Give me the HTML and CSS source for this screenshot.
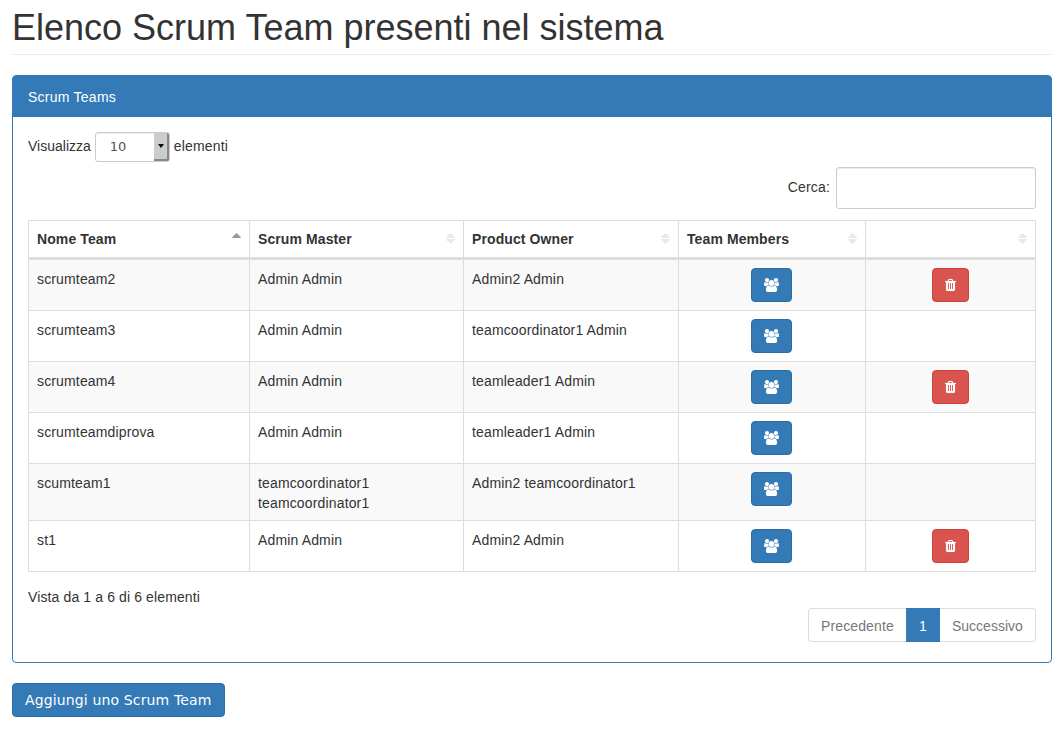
FILE: index.html
```html
<!DOCTYPE html>
<html lang="it">
<head>
<meta charset="utf-8">
<title>Scrum Team</title>
<link rel="stylesheet" href="styles.css">
</head>
<body>
<svg class="sprite" width="0" height="0" aria-hidden="true">
  <symbol id="users" viewBox="0 0 1920 1792"><path d="M593 896q-162 5-265 128h-134q-82 0-138-40.500t-56-118.500q0-353 124-353 6 0 43.500 21t97.500 42.500 119 21.500q67 0 133-23-5 37-5 66 0 139 81 256zm1071 637q0 120-73 189.500t-194 69.500h-874q-121 0-194-69.500t-73-189.500q0-53 3.500-103.500t14-109 26.500-108.500 43-97.500 62-81 85.500-53.500 111.500-20q10 0 43 21.500t73 48 107 48 135 21.500 135-21.500 107-48 73-48 43-21.500q61 0 111.500 20t85.500 53.500 62 81 43 97.500 26.500 108.500 14 109 3.500 103.500zm-1024-1277q0 106-75 181t-181 75-181-75-75-181 75-181 181-75 181 75 75 181zm704 384q0 159-112.500 271.500t-271.500 112.500-271.500-112.500-112.500-271.500 112.500-271.500 271.500-112.500 271.500 112.500 112.500 271.500zm576 225q0 78-56 118.500t-138 40.500h-134q-103-123-265-128 81-117 81-256 0-29-5-66 66 23 133 23 59 0 119-21.500t97.500-42.500 43.500-21q124 0 124 353zm-128-609q0 106-75 181t-181 75-181-75-75-181 75-181 181-75 181 75 75 181z"/></symbol>
  <symbol id="trash" viewBox="192 0 1408 1792"><path d="M704 1376v-704q0-14-9-23t-23-9h-64q-14 0-23 9t-9 23v704q0 14 9 23t23 9h64q14 0 23-9t9-23zm256 0v-704q0-14-9-23t-23-9h-64q-14 0-23 9t-9 23v704q0 14 9 23t23 9h64q14 0 23-9t9-23zm256 0v-704q0-14-9-23t-23-9h-64q-14 0-23 9t-9 23v704q0 14 9 23t23 9h64q14 0 23-9t9-23zm-544-992h448l-48-117q-7-9-17-11h-317q-10 2-17 11zm928 32v64q0 14-9 23t-23 9h-96v948q0 83-47 143.500t-113 60.500h-832q-66 0-113-58.500t-47-141.500v-952h-96q-14 0-23-9t-9-23v-64q0-14 9-23t23-9h309l70-167q15-37 54-63t79-26h320q40 0 79 26t54 63l70 167h309q14 0 23 9t9 23z"/></symbol>
  <symbol id="sort-asc" viewBox="0 0 9 12"><path d="M4.500 0L8.700 4Q9.200 5 8.200 5H.8Q-.2 5 .3 4z"/></symbol>
  <symbol id="sort" viewBox="0 0 9 12"><path d="M4.500 0L8.700 4Q9.200 5 8.200 5H.8Q-.2 5 .3 4zM4.500 11L8.700 7Q9.200 6 8.200 6H.8Q-.2 6 .3 7z"/></symbol>
</svg>

<h1 class="page-header">Elenco Scrum Team presenti nel sistema</h1>

<section class="panel">
  <div class="panel-heading">Scrum Teams</div>
  <div class="panel-body">
    <div class="length">
      <span>Visualizza</span>
      <div class="select"><span class="select-value">10</span><span class="select-arrow"></span></div>
      <span class="length-unit">elementi</span>
    </div>
    <label class="filter"><span class="filter-label">Cerca:</span><input class="search" type="text"></label>

    <table class="teams">
      <colgroup><col class="c-name"><col class="c-master"><col class="c-owner"><col class="c-members"><col class="c-actions"></colgroup>
      <thead>
        <tr>
          <th><div class="head">Nome Team<svg class="sort sorted"><use href="#sort-asc"/></svg></div></th>
          <th><div class="head">Scrum Master<svg class="sort"><use href="#sort"/></svg></div></th>
          <th><div class="head">Product Owner<svg class="sort"><use href="#sort"/></svg></div></th>
          <th><div class="head">Team Members<svg class="sort"><use href="#sort"/></svg></div></th>
          <th><div class="head"><span></span><svg class="sort"><use href="#sort"/></svg></div></th>
        </tr>
      </thead>
      <tbody>
        <tr><td>scrumteam2</td><td>Admin Admin</td><td>Admin2 Admin</td>
          <td><a class="btn primary"><svg class="users"><use href="#users"/></svg></a></td>
          <td><a class="btn danger"><svg class="trash"><use href="#trash"/></svg></a></td></tr>
        <tr><td>scrumteam3</td><td>Admin Admin</td><td>teamcoordinator1 Admin</td>
          <td><a class="btn primary"><svg class="users"><use href="#users"/></svg></a></td><td></td></tr>
        <tr><td>scrumteam4</td><td>Admin Admin</td><td>teamleader1 Admin</td>
          <td><a class="btn primary"><svg class="users"><use href="#users"/></svg></a></td>
          <td><a class="btn danger"><svg class="trash"><use href="#trash"/></svg></a></td></tr>
        <tr><td>scrumteamdiprova</td><td>Admin Admin</td><td>teamleader1 Admin</td>
          <td><a class="btn primary"><svg class="users"><use href="#users"/></svg></a></td><td></td></tr>
        <tr><td>scumteam1</td><td>teamcoordinator1<br>teamcoordinator1</td><td>Admin2 teamcoordinator1</td>
          <td><a class="btn primary"><svg class="users"><use href="#users"/></svg></a></td><td></td></tr>
        <tr><td>st1</td><td>Admin Admin</td><td>Admin2 Admin</td>
          <td><a class="btn primary"><svg class="users"><use href="#users"/></svg></a></td>
          <td><a class="btn danger"><svg class="trash"><use href="#trash"/></svg></a></td></tr>
      </tbody>
    </table>

    <div class="info">Vista da 1 a 6 di 6 elementi</div>
    <div class="pagination">
      <a class="page prev">Precedente</a><a class="page active">1</a><a class="page next">Successivo</a>
    </div>
  </div>
</section>

<a class="btn primary add">Aggiungi uno Scrum Team</a>
</body>
</html>
```
FILE: styles.css
```css
* { box-sizing: border-box; }
body {
  margin: 0;
  padding: 0 11px 0 12px;
  background: #fff;
  color: #333;
  font: 14px/20px "Liberation Sans", Arial, sans-serif;
}
.sprite { display: block; }
.page-header {
  height: 55px;
  margin: 0 0 20px;
  padding-top: 8px;
  border-bottom: 1px solid #eee;
  font-size: 36px;
  font-weight: 400;
  line-height: 40px;
  white-space: nowrap;
}
.panel {
  height: 588px;
  margin-bottom: 20px;
  border: 1px solid #337ab7;
  border-radius: 4px;
}
.panel-heading {
  height: 41px;
  padding: 11px 15px;
  background: #337ab7;
  border-radius: 2px 2px 0 0;
  color: #fff;
  letter-spacing: .25px;
}
.panel-body { padding: 15px; }
.length { display: flex; align-items: center; gap: 4px; height: 30px; }
.length > span { padding-bottom: 2px; }
.length-unit { letter-spacing: .17px; }
.select {
  display: flex;
  width: 75px;
  height: 30px;
  border: 1px solid #ccc;
  border-radius: 3px;
  box-shadow: inset 0 1px 1px rgba(0,0,0,.075);
  overflow: hidden;
}
.select-value {
  flex: 1;
  padding-left: 14px;
  color: #555;
  font: 13px/28px "DejaVu Sans", sans-serif;
}
.select-arrow {
  display: flex;
  align-items: center;
  justify-content: center;
  width: 15px;
  padding-left: 2px;
  background: #ccc;
  border-right: 2px solid #888;
  border-bottom: 2px solid #888;
}
.select-arrow::after {
  content: "";
  border: 3.5px solid transparent;
  border-top: 4px solid #000;
  border-bottom: 0;
}
.filter {
  display: flex;
  align-items: center;
  justify-content: flex-end;
  gap: 6px;
  height: 42px;
  margin: 5px 0 11px;
}
.filter-label { padding-bottom: 2px; letter-spacing: .15px; }
.search {
  width: 200px;
  height: 42px;
  border: 1px solid #ccc;
  border-radius: 3px;
  box-shadow: inset 0 1px 1px rgba(0,0,0,.075);
}
.teams {
  width: 1008px;
  table-layout: fixed;
  border-collapse: separate;
  border-spacing: 0;
  border: solid #ddd;
  border-width: 1px 0 0 1px;
}
.c-name { width: 221px; }
.c-master { width: 214px; }
.c-owner { width: 215px; }
.c-members { width: 187px; }
.c-actions { width: 170px; }
.teams th, .teams td {
  padding: 8px;
  border: solid #ddd;
  border-width: 0 1px 1px 0;
  text-align: left;
  vertical-align: top;
}
.teams th { border-bottom-width: 3px; letter-spacing: .1px; }
.teams td { height: 51px; padding-top: 9px; letter-spacing: .15px; }
.teams tbody tr:nth-child(odd) { background: #f9f9f9; }
.teams tbody tr:nth-child(5) td { height: 57px; padding-bottom: 7px; }
.teams td:nth-child(n+4) { padding-block: 8px; text-align: center; line-height: 0; letter-spacing: 0; }
.teams td:nth-child(4) { padding-right: 10px; }
.head { display: flex; justify-content: space-between; height: 20px; }
.sort { width: 9px; height: 12px; margin-top: 4px; fill: #e9e9e9; }
.sorted { fill: #999; }
.btn {
  display: inline-flex;
  align-items: center;
  height: 34px;
  padding: 0 12px;
  border: 1px solid;
  border-radius: 4px;
  color: #fff;
}
.primary { background: #337ab7; border-color: #2e6da4; }
.danger { background: #d9534f; border-color: #d43f3a; }
.btn svg { height: 14px; fill: #fff; stroke: #fff; }
.users { width: 15px; stroke-width: 20px; }
.trash { width: 11px; stroke-width: 15px; }
.info { padding-top: 15px; letter-spacing: .12px; }
.pagination { display: flex; justify-content: flex-end; margin-top: 1px; }
.page {
  height: 34px;
  padding: 7px 12px 0;
  border: 1px solid #ddd;
  color: #777;
  white-space: nowrap;
}
.prev { width: 98px; border-right: 0; border-radius: 4px 0 0 4px; letter-spacing: .12px; }
.next { width: 96px; border-left: 0; border-radius: 0 4px 4px 0; }
.active { width: 34px; background: #337ab7; border-color: #337ab7; color: #fff; }
.add { width: 213px; font-family: "DejaVu Sans", sans-serif; letter-spacing: .14px; white-space: nowrap; }
```
